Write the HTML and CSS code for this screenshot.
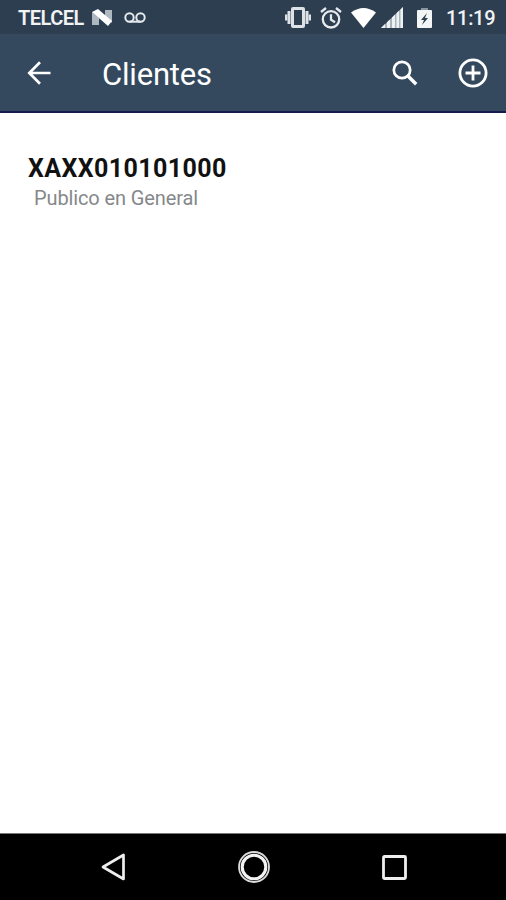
FILE: index.html
```
<!DOCTYPE html>
<html lang="es">
<head>
  <meta charset="UTF-8">
  <meta name="viewport" content="width=device-width, initial-scale=1.0">
  <title>Clientes</title>
  <link rel="stylesheet" href="styles.css">
</head>
<body>
  <div class="status-bar">
    <div class="status-left">
      <span class="carrier">TELCEL</span>
      <svg class="icon-n" width="20" height="17" viewBox="0 0 20 17">
        <path fill="#aeb8c1" d="M0 3l7 6v7H0zM13 1h7v13l-7-6z"/>
        <path fill="#fff" d="M0 3L6 0l14 12-4 5z"/>
      </svg>
      <svg class="icon-voicemail" width="22" height="11" viewBox="0 0 22 11" fill="none" stroke="#e6eaee" stroke-width="2">
        <circle cx="5.5" cy="5.5" r="4.2"/>
        <circle cx="16.5" cy="5.5" r="4.2"/>
        <path d="M5.500 9.700h11"/>
      </svg>
    </div>
    <div class="status-right">
      <svg class="icon-vibrate" width="26" height="21" viewBox="0 0 26 21" fill="#dde2e6">
        <path fill-rule="evenodd" d="M8 0h10q2 0 2 2v17q0 2-2 2H8q-2 0-2-2V2q0-2 2-2zM9 3v15h8V3z"/>
        <path d="M2.500 4h3v13h-3zM0 7.500h2.200v6H0zM20.500 4h3v13h-3zM23.800 7.500H26v6h-2.200z"/>
      </svg>
      <svg class="icon-alarm" width="22" height="22" viewBox="0 0 22 22" fill="none" stroke="#e6eaee" stroke-width="2.300">
        <circle cx="11" cy="12.3" r="8.2"/>
        <path d="M1 5l5-4M21 5l-5-4M11 7.200v5.400l4 2.600"/>
      </svg>
      <svg class="icon-wifi" width="25" height="20" viewBox="0 0 26 20" preserveAspectRatio="none">
        <path fill="#fff" d="M0 4.500Q13-4.500 26 4.500L13 20z"/>
      </svg>
      <svg class="icon-signal" width="22" height="21" viewBox="0 0 22 21">
        <path fill="#a9b3bc" d="M0 21L22 0v21z"/>
        <path fill="#eef1f3" d="M0 21l4-4v4zM6 15.300l3-2.900V21H6zM11 10.500l3-2.900V21h-3zM15.500 6.200l2.500-2.400V21h-2.500zM19.500 2.400L22 0v21h-2.500z"/>
      </svg>
      <svg class="icon-battery" width="15" height="20" viewBox="0 0 15 20">
        <path fill="#8795a2" d="M4 0h7v3H4z"/>
        <rect fill="#f4f5f6" y="2" width="15" height="18" rx="1"/>
        <path fill="#2d3e50" d="M10 5l-6 7h3l-2 5 6-7H8z"/>
      </svg>
      <span class="clock">11:19</span>
    </div>
  </div>

  <header class="app-bar">
    <svg class="icon-back" width="24" height="24" viewBox="0 0 24 24" fill="none" stroke="#fff" stroke-width="2.700">
      <path d="M23.500 12H2.500M13 1.300L2.300 12 13 22.700"/>
    </svg>
    <h1>Clientes</h1>
    <svg class="icon-search" width="26" height="26" viewBox="0 0 26 26" fill="none" stroke="#fff">
      <circle cx="10" cy="10" r="8.2" stroke-width="2.700"/>
      <path stroke-width="3.400" d="M15.500 15.500l8.700 8.700"/>
    </svg>
    <svg class="icon-add" width="30" height="30" viewBox="0 0 30 30" fill="none" stroke="#fff" stroke-width="2.800">
      <circle cx="15" cy="15" r="13.100"/>
      <path d="M15 7.500v15M7.500 15h15"/>
    </svg>
  </header>

  <main class="client-list">
    <div class="client">
      <div class="client-rfc">XAXX010101000</div>
      <div class="client-name">Publico en General</div>
    </div>
  </main>

  <nav class="nav-bar">
    <svg class="icon-nav-back" width="25" height="28" viewBox="0 0 25 28">
      <path fill="none" stroke="#eee" stroke-width="2.700" stroke-linejoin="round" d="M2 14L22.500 2v24z"/>
    </svg>
    <svg class="icon-nav-home" width="34" height="34" viewBox="0 0 34 34" fill="none">
      <circle cx="17" cy="17" r="15" stroke="#ddd" stroke-width="1.800"/>
      <circle cx="17" cy="17" r="11.800" stroke="#f4f4f4" stroke-width="3.100"/>
    </svg>
    <svg class="icon-nav-recent" width="25" height="25" viewBox="0 0 25 25">
      <rect fill="none" stroke="#eee" stroke-width="2.800" x="1.500" y="1.500" width="22" height="22" rx="1"/>
    </svg>
  </nav>
</body>
</html>
```
FILE: styles.css
```
* {
  box-sizing: border-box;
}
body {
  margin: 0;
  height: 100vh;
  display: flex;
  flex-direction: column;
  background: #fff;
  font-family: Roboto, sans-serif;
}
svg {
  display: block;
  flex-shrink: 0;
}

/* Barra de estado */
.status-bar {
  height: 34px;
  padding: 0 11px 0 18px;
  display: flex;
  justify-content: space-between;
  background: #2d3e50;
  color: #f1f3f5;
}
.status-left, .status-right {
  display: flex;
  align-items: center;
  height: 35px;
}
.carrier, .clock {
  font-size: 20px;
  font-weight: 500;
  line-height: 24px;
  white-space: nowrap;
}
.carrier {
  width: 74px;
  font-weight: 600;
  letter-spacing: -0.5px;
}
.icon-voicemail {
  margin-left: 12px;
}
.icon-alarm {
  margin-left: 9px;
}
.icon-wifi {
  margin-left: 9px;
}
.icon-signal {
  margin-left: 5px;
}
.icon-battery {
  margin-left: 14px;
}
.clock {
  width: 49px;
  margin-left: 14px;
  letter-spacing: -0.3px;
}

/* Encabezado */
.app-bar {
  height: 79px;
  padding: 0 18px 0 27px;
  display: flex;
  align-items: center;
  background: #34495e;
  border-bottom: 2px solid #171b4c;
}
.app-bar h1 {
  flex: 1;
  margin: 5px 0 0 51px;
  color: #fff;
  font-size: 31px;
  font-weight: 400;
  line-height: 36px;
  letter-spacing: -0.2px;
}
.icon-add {
  margin-left: 40px;
}

/* Lista de clientes */
.client-list {
  flex: 1;
  padding: 41px 28px;
}
.client-rfc {
  color: #111;
  font-size: 25px;
  font-weight: 700;
  line-height: 30px;
  letter-spacing: 0.4px;
}
.client-name {
  padding-left: 6px;
  color: #85888b;
  font-size: 20px;
  line-height: 29px;
  letter-spacing: -0.12px;
}

/* Barra de navegación */
.nav-bar {
  height: 67px;
  padding: 0 99px 0 101px;
  display: flex;
  align-items: center;
  justify-content: space-between;
  background: #000;
  border-top: 1px solid #777;
}
```
